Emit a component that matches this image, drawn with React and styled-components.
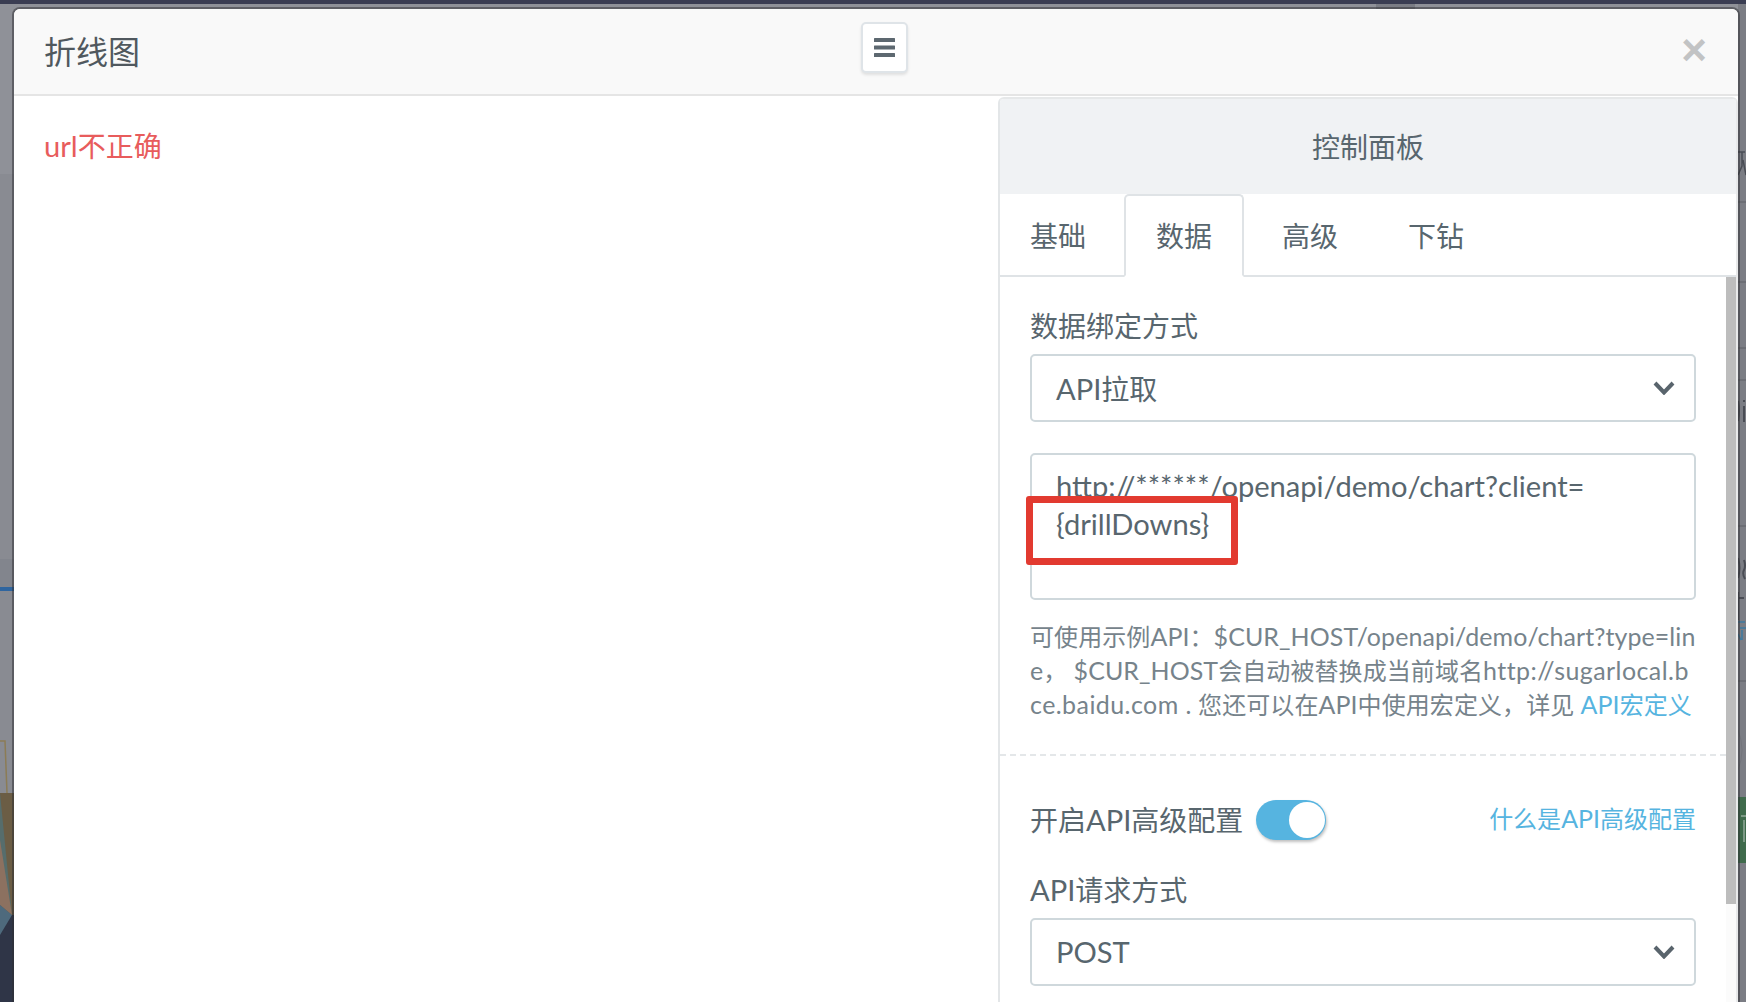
import React from "react";
import styled, { createGlobalStyle } from "styled-components";

const Global = createGlobalStyle`
  html, body { margin: 0; padding: 0; width: 1746px; height: 1002px; overflow: hidden; background: #7d7f86; }
  #root { height: 1002px; }
  * { box-sizing: border-box; }
`;

const Page = styled.div`
  display: grid;
  grid-template-columns: 14px 1fr 8px;
  grid-template-rows: 1002px;
  width: 1746px;
  height: 1002px;
  font-family: "Lato", "Noto Sans CJK SC", sans-serif;
  color: #58666e;
  background:
    linear-gradient(#7b7d85, #7b7d85) 1376px 4px / 39px 5px no-repeat,
    linear-gradient(180deg, #3a3d52 0, #3a3d52 4px, #8f9198 4px, #8f9198 100%);
  overflow: hidden;
`;

const Strip = styled.svg`
  display: block;
  width: 100%;
  height: 1002px;
`;

const Modal = styled.section`
  position: relative;
  margin-top: 9px;
  height: 993px;
  background: #fff;
  border-radius: 6px 6px 0 0;
  box-shadow: 0 0 0 2px rgba(45, 45, 50, 0.5);
  display: flex;
  flex-direction: column;
  overflow: hidden;
`;

const Header = styled.header`
  flex: none;
  height: 87px;
  display: grid;
  grid-template-columns: 817px auto 1fr;
  align-items: start;
  padding: 0 31px 0 30px;
  background: #f9f9f9;
  border-bottom: 2px solid #e5e5e5;
`;

const Title = styled.h1`
  margin: 25px 0 0;
  font-size: 32px;
  line-height: 36px;
  font-weight: 400;
  color: #50585e;
`;

const MenuButton = styled.button`
  width: 47px;
  height: 51px;
  margin-top: 13px;
  padding: 0;
  display: flex;
  align-items: center;
  justify-content: center;
  background: #fff;
  border: 2px solid #dfe4e8;
  border-radius: 5px;
  box-shadow: 0 2px 3px rgba(0, 0, 0, 0.1);
`;

const BarsIcon = styled.svg`
  width: 21px;
  height: 19px;
  fill: #5d6870;
`;

const Close = styled.button`
  justify-self: end;
  margin-top: 18px;
  padding: 0;
  border: 0;
  background: transparent;
  font-family: "Liberation Sans", sans-serif;
  font-size: 44px;
  line-height: 46px;
  font-weight: 700;
  color: #c2c3c4;
`;

const Body = styled.div`
  flex: 1;
  min-height: 0;
  display: grid;
  grid-template-columns: 984px 1fr;
`;

const Latin = styled.span`
  font-size: 1.04em;
  line-height: 1;
  letter-spacing: ${(p) => (p.$wide ? "0.45px" : "inherit")};
`;

const ErrorText = styled.div`
  padding: 30px 30px;
  font-size: 28px;
  line-height: 40px;
  color: #e85c5c;
`;

const Panel = styled.aside`
  margin-top: 1px;
  display: flex;
  flex-direction: column;
  min-height: 0;
  border-top: 2px solid #e6e8e9;
  border-left: 2px solid #e3e6e8;
  border-right: 2px solid #e8e9ea;
  border-top-left-radius: 6px;
  border-top-right-radius: 6px;
  overflow: hidden;
`;

const PanelHead = styled.div`
  flex: none;
  height: 95px;
  padding-bottom: 2px;
  display: flex;
  align-items: center;
  justify-content: center;
  font-size: 28px;
  color: #58666e;
  background: #f0f2f4;
`;

const Tabs = styled.nav`
  flex: none;
  height: 83px;
  margin-left: -2px;
  display: flex;
  align-items: flex-end;
  gap: 6px;
  border-bottom: 2px solid #dfe3e6;
`;

const Tab = styled.div`
  width: 120px;
  height: 83px;
  margin-bottom: -2px;
  display: flex;
  align-items: center;
  justify-content: center;
  padding-bottom: 2px;
  font-size: 28px;
  color: #58666e;
  background: ${(p) => (p.$active ? "#fff" : "transparent")};
  border: 2px solid ${(p) => (p.$active ? "#dfe3e6" : "transparent")};
  border-bottom-color: ${(p) => (p.$active ? "#fff" : "transparent")};
  border-radius: 5px 5px 0 0;
`;

const Scroller = styled.div`
  flex: 1;
  min-height: 0;
  display: grid;
  grid-template-columns: 1fr 10px;
  overflow: hidden;
`;

const Content = styled.div`
  min-width: 0;
`;

const Track = styled.div`
  background: #fbfbfb;
`;

const Thumb = styled.div`
  height: 627px;
  background: #bdbdbd;
`;

const Section = styled.div`
  padding: 29px 30px 32px;
`;

const Label = styled.div`
  font-size: 28px;
  line-height: 40px;
  color: #58666e;
`;

const SelectBox = styled.div`
  height: 68px;
  width: 666px;
  margin-top: 8px;
  display: flex;
  align-items: center;
  justify-content: space-between;
  padding: 0 19px 0 24px;
  font-size: 28px;
  color: #58666e;
  background: #fff;
  border: 2px solid #cfd8dc;
  border-radius: 5px;
`;

const Chevron = styled.svg`
  width: 22px;
  height: 14px;
  margin-bottom: 1px;
  fill: none;
  stroke: #59646c;
  stroke-width: 4;
`;

const Arrow = () => (
  <Chevron viewBox="0 0 22 14">
    <path d="M2 2 L11 11.5 L20 2" />
  </Chevron>
);

const UrlField = styled.div`
  position: relative;
  width: 666px;
  height: 147px;
  margin-top: 31px;
  padding: 12px 60px 0 24px;
  font-size: 28px;
  line-height: 38px;
  color: #58666e;
  background: #fff;
  border: 2px solid #cfd8dc;
  border-radius: 5px;
`;

const Highlight = styled.div`
  position: absolute;
  left: -6px;
  top: 41px;
  width: 212px;
  height: 69px;
  border: 7px solid #e23a30;
  border-radius: 3px;
  pointer-events: none;
`;

const Hint = styled.p`
  width: 666px;
  margin: 20px 0 0;
  font-size: 24px;
  line-height: 34px;
  color: #76838b;
  white-space: nowrap;
  letter-spacing: 0.08px;
`;

const TextLink = styled.a`
  color: #56b4e0;
  text-decoration: none;
`;

const Divider = styled.div`
  border-top: 2px dashed #e4e7e9;
`;

const ToggleRow = styled.div`
  display: flex;
  align-items: center;
  height: 40px;
  width: 666px;
`;

const Toggle = styled.div`
  position: relative;
  width: 70px;
  height: 40px;
  margin-left: 13px;
  border-radius: 20px;
  background: #56b4e0;
  box-shadow: 1px 2px 3px rgba(0, 0, 0, 0.25);
`;

const Knob = styled.span`
  position: absolute;
  right: 1px;
  top: 2px;
  width: 36px;
  height: 36px;
  border-radius: 50%;
  background: #fff;
`;

const HelpLink = styled(TextLink)`
  margin-left: auto;
  margin-bottom: 3px;
  font-size: 24px;
  line-height: 34px;
`;

const LowerSection = styled(Section)`
  padding-top: 44px;
`;

const FieldLabel = styled(Label)`
  margin-top: 30px;
`;

const App = () => (
  <>
    <Global />
    <Page>
      <Strip viewBox="0 0 14 1002" preserveAspectRatio="none">
        <rect x="0" y="174" width="14" height="385" fill="#898b92" />
        <rect x="0" y="559" width="14" height="28" fill="#82858d" />
        <rect x="0" y="587" width="14" height="4" fill="#2f659f" />
        <rect x="0" y="591" width="14" height="202" fill="#898b92" />
        <path d="M0 741 H5 L7 793" fill="none" stroke="#8c7c55" strokeWidth="1.5" />
        <rect x="0" y="793" width="14" height="122" fill="#6b5d45" />
        <path d="M0 793 L12 915 L0 850Z" fill="#566d6c" />
        <path d="M0 840 L12 915 L0 905Z" fill="#8c7160" />
        <rect x="0" y="915" width="14" height="87" fill="#2f3547" />
        <path d="M0 905 L12 915 L0 935Z" fill="#4e6a7d" />
      </Strip>
      <Modal>
        <Header>
          <Title>折线图</Title>
          <MenuButton aria-label="menu">
            <BarsIcon viewBox="0 0 21 19">
              <rect width="21" height="4" y="0" rx="0.5" />
              <rect width="21" height="4" y="7.5" rx="0.5" />
              <rect width="21" height="4" y="15" rx="0.5" />
            </BarsIcon>
          </MenuButton>
          <Close aria-label="close">×</Close>
        </Header>
        <Body>
          <ErrorText><Latin>url</Latin>不正确</ErrorText>
          <Panel>
            <PanelHead>控制面板</PanelHead>
            <Tabs>
              <Tab>基础</Tab>
              <Tab $active>数据</Tab>
              <Tab>高级</Tab>
              <Tab>下钻</Tab>
            </Tabs>
            <Scroller>
              <Content>
                <Section>
                  <Label>数据绑定方式</Label>
                  <SelectBox>
                    <span><Latin>API</Latin>拉取</span>
                    <Arrow />
                  </SelectBox>
                  <UrlField>
                    <Latin>http://******/openapi/demo/chart?client=<br />{"{drillDowns}"}</Latin>
                    <Highlight />
                  </UrlField>
                  <Hint>
                    可使用示例<Latin>API</Latin>：<Latin>$CUR_HOST/openapi/demo/chart?type=lin</Latin><br />
                    <Latin>e</Latin>， <Latin>$CUR_HOST</Latin>会自动被替换成当前域名<Latin $wide>http://sugarlocal.b</Latin><br />
                    <Latin $wide>ce.baidu.com .</Latin> 您还可以在<Latin>API</Latin>中使用宏定义，详见 <TextLink><Latin>API</Latin>宏定义</TextLink>
                  </Hint>
                </Section>
                <Divider />
                <LowerSection>
                  <ToggleRow>
                    <Label as="span">开启<Latin>API</Latin>高级配置</Label>
                    <Toggle>
                      <Knob />
                    </Toggle>
                    <HelpLink>什么是<Latin>API</Latin>高级配置</HelpLink>
                  </ToggleRow>
                  <FieldLabel><Latin>API</Latin>请求方式</FieldLabel>
                  <SelectBox>
                    <Latin>POST</Latin>
                    <Arrow />
                  </SelectBox>
                </LowerSection>
              </Content>
              <Track>
                <Thumb />
              </Track>
            </Scroller>
          </Panel>
        </Body>
      </Modal>
      <Strip viewBox="0 0 8 1002" preserveAspectRatio="none">
        <rect x="0" y="4" width="8" height="998" fill="#7b7d84" />
        <rect x="0" y="201" width="8" height="2" fill="#6c6e75" />
        <rect x="0" y="281" width="8" height="2" fill="#6c6e75" />
        <rect x="0" y="347" width="8" height="2" fill="#6c6e75" />
        <rect x="0" y="379" width="8" height="2" fill="#6c6e75" />
        <rect x="0" y="525" width="8" height="2" fill="#6c6e75" />
        <rect x="0" y="680" width="8" height="2" fill="#6c6e75" />
        <path d="M0 152 H7 M4 152 V166 L0 175 M5 160 L8 175" fill="none" stroke="#4a4d55" strokeWidth="1.5" />
        <path d="M0 401 Q2 411 0 421 M6 400 V402 M6 406 V422" fill="none" stroke="#4a4d55" strokeWidth="2" />
        <path d="M0 558 Q3 568 0 578 M6 560 Q8 566 6 570 T7 579" fill="none" stroke="#4a4d55" strokeWidth="2" />
        <path d="M0 592 V620 M0 598 H6" fill="none" stroke="#4a4d55" strokeWidth="2" />
        <path d="M0 622 H7 M2 628 H8 M4 630 V640 M0 634 L3 640" fill="none" stroke="#3e7aa0" strokeWidth="1.5" />
        <path d="M0 730 Q8 750 0 770" fill="none" stroke="#72747b" strokeWidth="1" />
        <rect x="0" y="797" width="8" height="66" fill="#3f6b4c" />
        <rect x="3" y="815" width="5" height="2" fill="#7d9a86" />
        <rect x="5" y="820" width="2" height="22" fill="#7d9a86" />
      </Strip>
    </Page>
  </>
);

export default App;
